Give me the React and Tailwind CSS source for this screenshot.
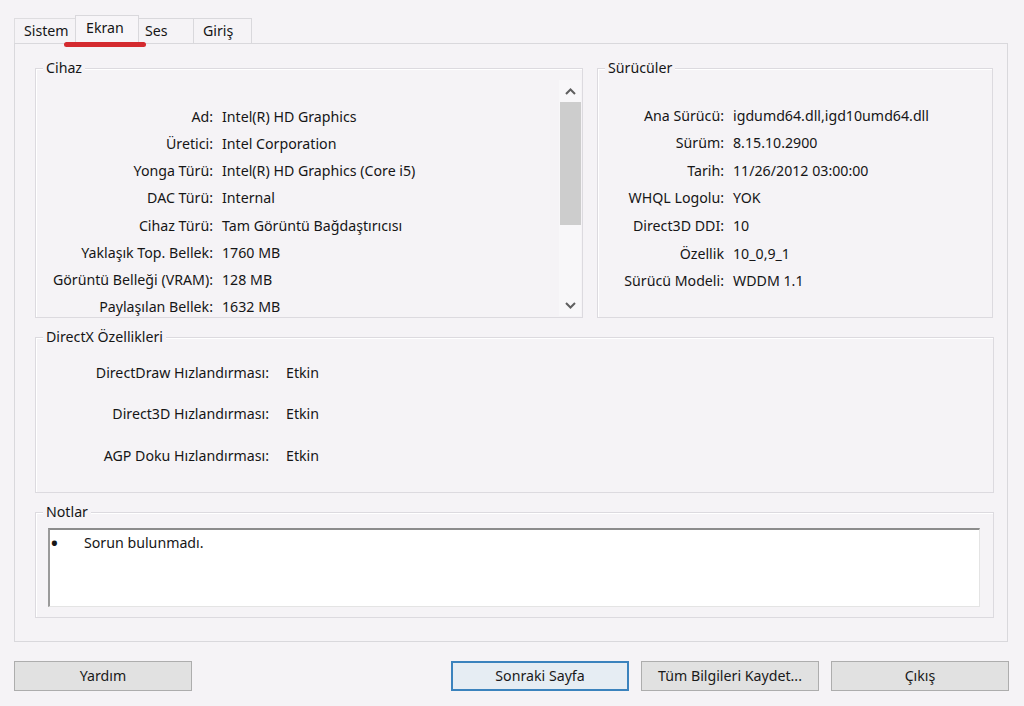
import React from "react";

const cihaz = [
  ["Ad:", "Intel(R) HD Graphics"],
  ["Üretici:", "Intel Corporation"],
  ["Yonga Türü:", "Intel(R) HD Graphics (Core i5)"],
  ["DAC Türü:", "Internal"],
  ["Cihaz Türü:", "Tam Görüntü Bağdaştırıcısı"],
  ["Yaklaşık Top. Bellek:", "1760 MB"],
  ["Görüntü Belleği (VRAM):", "128 MB"],
  ["Paylaşılan Bellek:", "1632 MB"],
];

const suruculer = [
  ["Ana Sürücü:", "igdumd64.dll,igd10umd64.dll"],
  ["Sürüm:", "8.15.10.2900"],
  ["Tarih:", "11/26/2012 03:00:00"],
  ["WHQL Logolu:", "YOK"],
  ["Direct3D DDI:", "10"],
  ["Özellik", "10_0,9_1"],
  ["Sürücü Modeli:", "WDDM 1.1"],
];

const dx = [
  ["DirectDraw Hızlandırması:", "Etkin"],
  ["Direct3D Hızlandırması:", "Etkin"],
  ["AGP Doku Hızlandırması:", "Etkin"],
];

function GroupTitle({ children }) {
  return (
    <span className="-mt-[10px] ml-[7px] px-[3px] self-start bg-[#f5f3f6] leading-[18px] whitespace-nowrap">
      {children}
    </span>
  );
}

function Chevron({ up }) {
  return (
    <svg width="11" height="7" viewBox="0 0 11 7" fill="none">
      {up ? (
        <path d="M1 6 L5.5 1.5 L10 6" stroke="#5f5f5f" strokeWidth="2" />
      ) : (
        <path d="M1 1 L5.5 5.5 L10 1" stroke="#5f5f5f" strokeWidth="2" />
      )}
    </svg>
  );
}

function Button({ children, primary }) {
  return (
    <div
      className={
        primary
          ? "w-[178px] h-[30px] flex items-center justify-center border-2 border-[#3b83bd] bg-[#e6edf3] text-[#1a1a1a]"
          : "w-[178px] h-[30px] flex items-center justify-center border border-[#adadad] bg-[#e1e1e1] text-[#1a1a1a]"
      }
    >
      {children}
    </div>
  );
}

export default function App() {
  return (
    <div className="w-[1024px] h-[706px] bg-[#f5f3f6] overflow-hidden text-[14.2px] text-[#161616] font-['Noto_Sans',sans-serif] leading-none">
      {/* Tabs */}
      <div className="relative h-[43px] pl-[14px] flex items-end">
        <div className="w-[61px] h-[25px] border-t border-l border-[#dedde0] pl-[9px] flex items-center">
          Sistem
        </div>
        <div className="relative z-10 -mb-px w-[64px] h-[29px] border-t border-l border-r border-[#d9d8dc] bg-[#f7f5f8] pl-[10px] pb-[4px] flex items-center">
          Ekran
        </div>
        <div className="w-[55px] h-[25px] border-t border-r border-[#d9d8dc] pl-[6px] flex items-center">
          Ses
        </div>
        <div className="w-[58px] h-[25px] border-t border-r border-[#d9d8dc] pl-[9px] flex items-center">
          Giriş
        </div>
        <div className="absolute left-[64px] top-[42px] z-20 w-[82px] h-[5px] rounded-full bg-[#d42a2f]" />
      </div>

      {/* Panel */}
      <div className="ml-[14px] w-[994px] h-[599px] border border-[#d9d8dc] bg-[#f5f3f6] pl-[20px] pt-[24px] flex flex-col">
        {/* Row 1 */}
        <div className="flex gap-[14px]">
          {/* Cihaz */}
          <div className="w-[548px] h-[250px] border border-[#dcdadf] shadow-[inset_1px_1px_0_#ffffff] flex flex-col">
            <GroupTitle>Cihaz</GroupTitle>
            <div className="flex flex-1 min-h-0">
              <div className="flex-1 pt-[30px] flex flex-col gap-[7.6px]">
                {cihaz.map(([l, v]) => (
                  <div key={l} className="h-[20px] flex items-center whitespace-nowrap">
                    <div className="w-[177px] text-right">{l}</div>
                    <div className="ml-[9px]">{v}</div>
                  </div>
                ))}
              </div>
              <div className="w-[22px] mr-[1px] mt-[3px] mb-[1px] bg-[#f8f7f9] flex flex-col items-center">
                <div className="h-[22px] flex items-center justify-center">
                  <Chevron up />
                </div>
                <div className="w-[21px] h-[123px] bg-[#cdcdcd]" />
                <div className="flex-1" />
                <div className="h-[22px] flex items-center justify-center">
                  <Chevron />
                </div>
              </div>
            </div>
          </div>

          {/* Sürücüler */}
          <div className="w-[396px] h-[250px] border border-[#dcdadf] shadow-[inset_1px_1px_0_#ffffff] flex flex-col">
            <GroupTitle>Sürücüler</GroupTitle>
            <div className="pt-[25px]">
              {suruculer.map(([l, v]) => (
                <div key={l} className="h-[27.6px] flex items-center whitespace-nowrap">
                  <div className="w-[126px] text-right">{l}</div>
                  <div className="ml-[9px]">{v}</div>
                </div>
              ))}
            </div>
          </div>
        </div>

        {/* DirectX */}
        <div className="mt-[19px] w-[959px] h-[156px] border border-[#dcdadf] shadow-[inset_1px_1px_0_#ffffff] flex flex-col">
          <GroupTitle>DirectX Özellikleri</GroupTitle>
          <div className="pt-[6px]">
            {dx.map(([l, v]) => (
              <div key={l} className="h-[41.6px] flex items-center whitespace-nowrap">
                <div className="w-[233px] text-right">{l}</div>
                <div className="ml-[17px]">{v}</div>
              </div>
            ))}
          </div>
        </div>

        {/* Notlar */}
        <div className="mt-[19px] w-[959px] h-[106px] border border-[#dcdadf] shadow-[inset_1px_1px_0_#ffffff] flex flex-col">
          <GroupTitle>Notlar</GroupTitle>
          <div className="mt-[7px] ml-[12px] w-[932px] h-[79px] bg-white border-t-2 border-l-2 border-r border-b border-t-[#8c8c8c] border-l-[#9a9a9a] border-r-[#e4e4e4] border-b-[#e4e4e4] flex items-start pt-[6px]">
            <span className="w-[34px] pl-[1px] text-[18px] leading-[15px] font-bold">•</span>
            <span>Sorun bulunmadı.</span>
          </div>
        </div>
      </div>

      {/* Buttons */}
      <div className="mt-[19px] pl-[14px] pr-[15px] flex">
        <Button>Yardım</Button>
        <div className="ml-auto flex gap-[12px]">
          <Button primary>Sonraki Sayfa</Button>
          <Button>Tüm Bilgileri Kaydet...</Button>
          <Button>Çıkış</Button>
        </div>
      </div>
    </div>
  );
}
